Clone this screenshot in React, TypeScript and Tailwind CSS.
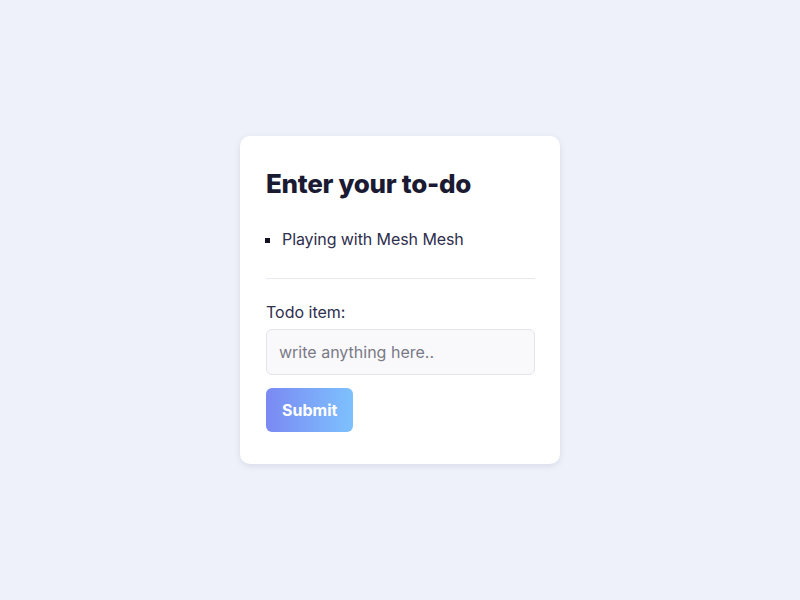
import React, { useState } from 'react';

export default function App() {
  const [items, setItems] = useState<string[]>(['Playing with Mesh Mesh']);
  const [text, setText] = useState('');

  const handleSubmit = (e: React.FormEvent) => {
    e.preventDefault();
    if (!text.trim()) return;
    setItems(prev => [...prev, text.trim()]);
    setText('');
  };

  return (
    <div className="min-h-screen w-full bg-[#eef1f9] flex items-center justify-center font-['Inter',sans-serif]">
      <div className="w-[320px] bg-white rounded-[10px] shadow-[0_2px_6px_rgba(60,70,120,0.12)] pl-[26px] pr-[25px] pt-[32px] pb-[32px]">
        <h1 className="text-[26px] leading-[32px] font-extrabold tracking-[-0.3px] text-[#1a1a33]">Enter your to-do</h1>

        <ul className="mt-[27px] list-[square] pl-[16px] text-[16px] leading-6 tracking-[-0.08px] text-[#2e2e4d] marker:text-[#111122]">
          {items.map((item, i) => (
            <li key={i}>{item}</li>
          ))}
        </ul>

        <hr className="mt-[27px] border-0 h-px bg-[#e8e9ef]" />

        <form onSubmit={handleSubmit} className="mt-[21px] flex flex-col">
          <label htmlFor="todo" className="text-[16px] leading-6 text-[#2e2e4d]">Todo item:</label>
          <input
            id="todo"
            value={text}
            onChange={e => setText(e.target.value)}
            placeholder="write anything here.."
            className="mt-[5px] h-[46px] w-full rounded-[6px] border border-[#e3e4ec] bg-[#f9f9fc] px-[12px] text-[16px] text-[#2e2e4d] placeholder:text-[#7a7a86] outline-none"
          />
          <div className="mt-[13px]">
            <button
              type="submit"
              className="h-[44px] px-[16px] rounded-[6px] bg-gradient-to-r from-[#7a89f3] to-[#7dc1fe] text-white text-[16px] font-bold"
            >
              Submit
            </button>
          </div>
        </form>
      </div>
    </div>
  );
}
